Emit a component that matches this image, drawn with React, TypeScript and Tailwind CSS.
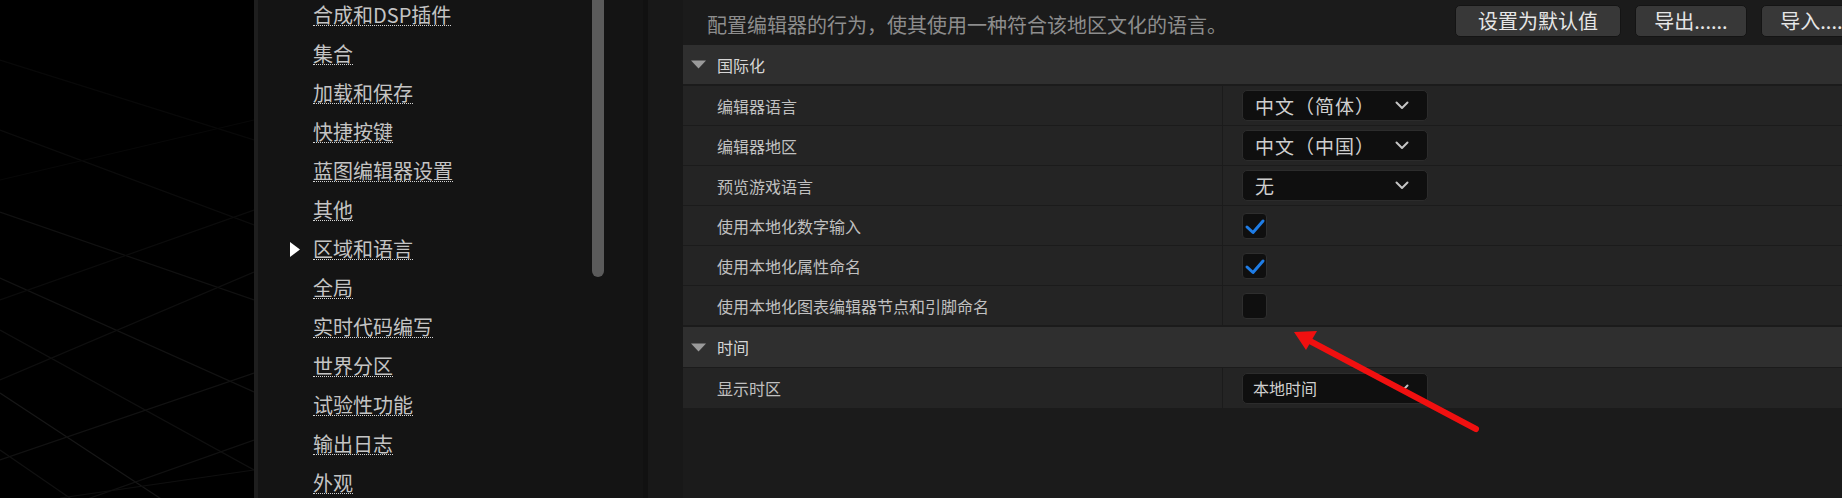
import React from "react";

const NAV = [
  "合成和DSP插件",
  "集合",
  "加载和保存",
  "快捷按键",
  "蓝图编辑器设置",
  "其他",
  "区域和语言",
  "全局",
  "实时代码编写",
  "世界分区",
  "试验性功能",
  "输出日志",
  "外观",
];

function ViewportGrid() {
  // faint perspective floor grid of the level viewport
  const lines: [number, number, number, number, string][] = [
    [0, 60, 254, 140, "#090909"],
    [0, 130, 254, 225, "#0c0c0c"],
    [0, 212, 254, 300, "#111111"],
    [0, 278, 254, 392, "#131313"],
    [0, 330, 254, 470, "#101010"],
    [0, 393, 254, 560, "#171717"],
    [0, 450, 160, 560, "#111111"],
    [0, 300, 254, 210, "#0c0c0c"],
    [0, 380, 254, 272, "#0f0f0f"],
    [0, 460, 254, 373, "#121212"],
    [0, 530, 254, 440, "#111111"],
    [60, 498, 254, 470, "#0f0f0f"],
    [0, 180, 254, 120, "#080808"],
  ];
  return (
    <svg width="254" height="498" viewBox="0 0 254 498" className="block">
      {lines.map(([x1, y1, x2, y2, c], i) => (
        <line key={i} x1={x1} y1={y1} x2={x2} y2={y2} stroke={c} strokeWidth="1.2" />
      ))}
    </svg>
  );
}

function NavItem({ label, active }: { label: string; active?: boolean }) {
  return (
    <div className="flex h-[39px] shrink-0 items-start pl-[32px] pt-[10px]">
      <div className="flex h-[20px] w-[23px] shrink-0 items-center">
        {active && (
          <svg width="10" height="15" viewBox="0 0 10 15">
            <polygon points="0,0 10,7.5 0,15" fill="#ffffff" />
          </svg>
        )}
      </div>
      <span className="whitespace-nowrap border-b border-dotted border-[#d4d4d4] text-[20px] leading-[20px] text-[#c4c4c4]">
        {label}
      </span>
    </div>
  );
}

function Sidebar() {
  return (
    <div className="flex h-full w-[385px] shrink-0 bg-[#141414]">
      <div className="-mt-[5px] flex w-[334px] shrink-0 flex-col">
        {NAV.map((n) => (
          <NavItem key={n} label={n} active={n === "区域和语言"} />
        ))}
      </div>
      <div className="w-[12px] shrink-0">
        <div className="h-[277px] w-full rounded-b-full bg-[#5b5b5b]" />
      </div>
    </div>
  );
}

function TopButton({ label, w }: { label: string; w: string }) {
  return (
    <div
      className={`flex h-[32px] shrink-0 items-center justify-center rounded-[5px] border border-[#141414] bg-[#383838] text-[20px] leading-none text-[#e6e6e6] ${w}`}
    >
      {label}
    </div>
  );
}

function Caret() {
  return (
    <svg width="15" height="9" viewBox="0 0 15 9" className="shrink-0">
      <polygon points="0,0.5 15,0.5 7.5,8.5" fill="#9a9a9a" />
    </svg>
  );
}

function Category({ label, h, className = "" }: { label: string; h: string; className?: string }) {
  return (
    <div className={`flex shrink-0 items-center gap-[11px] bg-[#2f2f2f] pl-[8px] ${h} ${className}`}>
      <Caret />
      <span className="text-[16px] leading-none text-[#d6d6d6]">{label}</span>
    </div>
  );
}

function Row({ label, h = "h-[39px]", children }: { label: string; h?: string; children?: React.ReactNode }) {
  return (
    <div className={`flex shrink-0 ${h}`}>
      <div className="flex w-[539px] shrink-0 items-center bg-[#242424] pl-[34px] text-[16px] leading-none text-[#c0c0c0]">
        {label}
      </div>
      <div className="w-px shrink-0 bg-[#1b1b1b]" />
      <div className="flex flex-1 items-center bg-[#242424] pl-[19px]">{children}</div>
    </div>
  );
}

function Chevron() {
  return (
    <svg width="14" height="9" viewBox="0 0 14 9" className="shrink-0">
      <path d="M1.5 1.5 L7 7 L12.5 1.5" stroke="#c4c4c4" strokeWidth="2" fill="none" strokeLinecap="round" strokeLinejoin="round" />
    </svg>
  );
}

function Combo({ value, small }: { value: string; small?: boolean }) {
  return (
    <div
      className={`flex h-[31px] w-[186px] items-center justify-between rounded-[5px] border border-[#2c2c2c] bg-[#0f0f0f] pr-[18px] leading-none text-[#cfcfcf] ${
        small ? "pl-[10px] text-[16px]" : "pl-[12px] text-[19px] tracking-[1px]"
      }`}
    >
      <span className="whitespace-nowrap">{value}</span>
      <Chevron />
    </div>
  );
}

function Check({ on }: { on?: boolean }) {
  return (
    <div className="flex h-[26px] w-[25px] items-center justify-center rounded-[4px] border border-[#2e2e2e] bg-[#0f0f0f]">
      {on && (
        <svg width="23" height="24" viewBox="0 0 23 24">
          <path d="M4 13 L10 18.5 L20 7" stroke="#1f7de6" strokeWidth="3" fill="none" strokeLinecap="round" strokeLinejoin="round" />
        </svg>
      )}
    </div>
  );
}

function Details() {
  return (
    <div className="flex h-full w-[1159px] shrink-0 flex-col bg-[#1b1b1b]">
      <div className="flex h-[45px] shrink-0 items-start">
        <div className="w-[772px] shrink-0 whitespace-nowrap pl-[24px] pt-[15px] text-[20px] leading-[20px] text-[#8d8d8d]">
          配置编辑器的行为，使其使用一种符合该地区文化的语言。
        </div>
        <div className="flex shrink-0 gap-[14px] pt-[5px]">
          <TopButton label="设置为默认值" w="w-[166px]" />
          <TopButton label="导出......" w="w-[112px]" />
          <TopButton label="导入......" w="w-[112px]" />
        </div>
      </div>

      <Category label="国际化" h="h-[39px]" />
      <div className="mt-[2px] flex shrink-0 flex-col gap-px">
        <Row label="编辑器语言">
          <Combo value="中文（简体）" />
        </Row>
        <Row label="编辑器地区">
          <Combo value="中文（中国）" />
        </Row>
        <Row label="预览游戏语言">
          <Combo value="无" />
        </Row>
        <Row label="使用本地化数字输入">
          <Check on />
        </Row>
        <Row label="使用本地化属性命名">
          <Check on />
        </Row>
        <Row label="使用本地化图表编辑器节点和引脚命名">
          <Check />
        </Row>
      </div>

      <Category label="时间" h="h-[40px]" className="mt-[2px]" />
      <div className="mt-px flex shrink-0 flex-col">
        <Row label="显示时区" h="h-[40px]">
          <Combo value="本地时间" small />
        </Row>
      </div>
    </div>
  );
}

export default function App() {
  return (
    <div className="relative flex h-[498px] w-[1842px] overflow-hidden bg-black font-['Noto_Sans_CJK_SC','Noto_Sans',sans-serif]">
      <div className="w-[254px] shrink-0">
        <ViewportGrid />
      </div>
      <div className="w-[4px] shrink-0 bg-[#1e1e1e]" />
      <Sidebar />
      <div className="w-[5px] shrink-0 bg-[#111111]" />
      <div className="w-[35px] shrink-0 bg-[#181818]" />
      <Details />

      {/* red annotation arrow */}
      <svg className="pointer-events-none absolute left-0 top-0" width="1842" height="498" viewBox="0 0 1842 498">
        <line x1="1476" y1="429" x2="1308" y2="340" stroke="#f01010" strokeWidth="6" strokeLinecap="round" />
        <polygon points="1294,332 1317,331 1306,350" fill="#f01010" />
      </svg>
    </div>
  );
}
